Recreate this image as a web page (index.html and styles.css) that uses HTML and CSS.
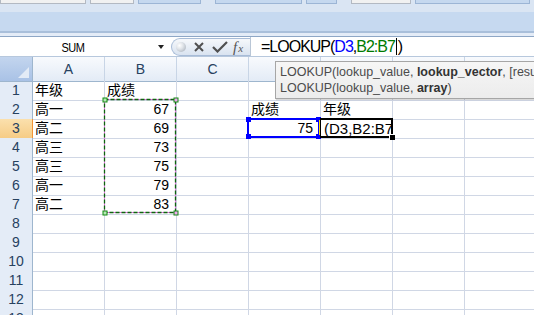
FILE: index.html
```html
<!DOCTYPE html>
<html lang="zh-CN">
<head>
  <meta charset="UTF-8" />
  <title>LOOKUP</title>
  <link rel="stylesheet" href="styles.css">
</head>
<body>
  <div class="ribbon">
    <div class="tabs">
      <span class="tab grey" style="width:90px"></span>
      <span class="tab grey" style="width:44px"></span>
      <span class="tab blue" style="width:65px"></span>
      <span class="tab blue gap" style="width:91px"></span>
      <span class="tab blue" style="width:31px"></span>
      <span class="tab grey gap" style="width:62px"></span>
      <span class="tab blue" style="width:120px"></span>
    </div>
  </div>

  <div class="fbar">
    <div class="namebox">
      <span class="name">SUM</span>
      <span class="drop"></span>
    </div>
    <div class="btns">
      <span class="knob"></span>
      <svg class="ico" width="12" height="12" viewBox="0 0 12 12">
        <path d="M2 2L10 10M10 2L2 10" stroke="#505050" stroke-width="2" fill="none"/>
      </svg>
      <svg class="ico" width="16" height="12" viewBox="0 0 16 12">
        <path d="M1 6L5.5 10.5L15 1" stroke="#505050" stroke-width="2.2" fill="none"/>
      </svg>
      <span class="fx"><i>f</i><i class="x">x</i></span>
    </div>
    <div class="formula">=LOOKUP(<span class="ref-d">D3</span>,<span class="ref-b">B2:B7</span><span class="caret"></span>)</div>
  </div>

  <div class="sheet">
    <!-- D..G headers sit under the tooltip -->
    <div class="row head">
      <div class="corner"></div>
      <div class="ch">A</div><div class="ch">B</div><div class="ch">C</div><div class="ch"></div>
      <div class="ch"></div><div class="ch"></div><div class="ch"></div>
    </div>
    <div class="row"><div class="rh">1</div><div class="c">年级</div><div class="c">成绩</div><div class="c"></div><div class="c"></div><div class="c"></div><div class="c"></div><div class="c"></div></div>
    <div class="row"><div class="rh">2</div><div class="c">高一</div><div class="c num">67</div><div class="c"></div><div class="c">成绩</div><div class="c">年级</div><div class="c"></div><div class="c"></div></div>
    <div class="row"><div class="rh sel">3</div><div class="c">高二</div><div class="c num">69</div><div class="c"></div><div class="c num">75</div><div class="c edit">(D3,B2:B7</div><div class="c"></div><div class="c"></div></div>
    <div class="row"><div class="rh">4</div><div class="c">高三</div><div class="c num">73</div><div class="c"></div><div class="c"></div><div class="c"></div><div class="c"></div><div class="c"></div></div>
    <div class="row"><div class="rh">5</div><div class="c">高三</div><div class="c num">75</div><div class="c"></div><div class="c"></div><div class="c"></div><div class="c"></div><div class="c"></div></div>
    <div class="row"><div class="rh">6</div><div class="c">高一</div><div class="c num">79</div><div class="c"></div><div class="c"></div><div class="c"></div><div class="c"></div><div class="c"></div></div>
    <div class="row"><div class="rh">7</div><div class="c">高二</div><div class="c num">83</div><div class="c"></div><div class="c"></div><div class="c"></div><div class="c"></div><div class="c"></div></div>
    <div class="row"><div class="rh">8</div><div class="c"></div><div class="c"></div><div class="c"></div><div class="c"></div><div class="c"></div><div class="c"></div><div class="c"></div></div>
    <div class="row"><div class="rh">9</div><div class="c"></div><div class="c"></div><div class="c"></div><div class="c"></div><div class="c"></div><div class="c"></div><div class="c"></div></div>
    <div class="row"><div class="rh">10</div><div class="c"></div><div class="c"></div><div class="c"></div><div class="c"></div><div class="c"></div><div class="c"></div><div class="c"></div></div>
    <div class="row"><div class="rh">11</div><div class="c"></div><div class="c"></div><div class="c"></div><div class="c"></div><div class="c"></div><div class="c"></div><div class="c"></div></div>
    <div class="row"><div class="rh">12</div><div class="c"></div><div class="c"></div><div class="c"></div><div class="c"></div><div class="c"></div><div class="c"></div><div class="c"></div></div>
    <div class="row"><div class="rh">13</div><div class="c"></div><div class="c"></div><div class="c"></div><div class="c"></div><div class="c"></div><div class="c"></div><div class="c"></div></div>

    <!-- copy range B2:B7 -->
    <svg class="ants" width="78" height="120" viewBox="0 0 78 120">
      <rect x="2.5" y="2.5" width="71" height="113" fill="none" stroke="#e76fe7" stroke-width="1"/>
      <rect x="2.5" y="2.5" width="71" height="113" fill="none" stroke="#0e650e" stroke-width="1.3" stroke-dasharray="4 2"/>
      <rect x="1" y="1" width="4" height="4" fill="#b6e8b6" stroke="#138a13"/>
      <rect x="72" y="1" width="4" height="4" fill="#f3a8f3" stroke="#138a13"/>
      <rect x="1" y="114" width="4" height="4" fill="#b6e8b6" stroke="#138a13"/>
      <rect x="72" y="114" width="4" height="4" fill="#f3a8f3" stroke="#138a13"/>
    </svg>

    <!-- reference D3 -->
    <div class="refbox">
      <span class="h tl"></span><span class="h tr"></span>
      <span class="h bl"></span><span class="h br"></span>
    </div>
    <span class="yel"></span>

    <!-- active cell E3 -->
    <div class="active"><span class="fill"></span></div>

    <div class="tip">
      <div>LOOKUP(lookup_value, <b>lookup_vector</b>, [result_vector])</div>
      <div>LOOKUP(lookup_value, <b>array</b>)</div>
    </div>
  </div>
</body>
</html>
```

FILE: styles.css
```css
body {
  margin: 0;
  width: 534px;
  height: 315px;
  overflow: hidden;
  background: #fff;
  font-family: "Liberation Sans", "Noto Sans CJK SC", sans-serif;
  color: #000;
}

/* ribbon strip */
.ribbon {
  height: 31px;
  background: linear-gradient(#dae5f3 0, #dae5f3 12px, #c6d9f0 12px);
  border-bottom: 2px solid #a9bfda;
}
.tabs {
  display: flex;
  height: 4px;
}
.tab {
  height: 3px;
  margin-right: 4px;
  border: 1px solid #b3b9c2;
  border-top: 0;
}
.tab.grey { background: #f1f1f1; }
.tab.blue { background: #c5d8ef; border-color: #9cb5d5; }
.tab.gap { margin-left: 10px; }

/* formula bar */
.fbar {
  display: flex;
  height: 19px;
  border-top: 3px solid #e4ecf7;
  box-shadow: inset 0 1px 0 #8ea7c6;
  padding-top: 1px;
  border-bottom: 1px solid #b7c8dd;
}
.namebox {
  width: 171px;
  display: flex;
  align-items: center;
  position: relative;
}
.name {
  width: 146px;
  text-align: center;
  font-size: 11px;
  letter-spacing: -0.5px;
  transform: scaleY(1.15);
}
.drop {
  position: absolute;
  left: 158px;
  top: 8px;
  border-left: 3px solid transparent;
  border-right: 3px solid transparent;
  border-top: 4px solid #222;
}
.btns {
  width: 74px;
  margin-top: 1px;
  display: flex;
  align-items: center;
  gap: 7px;
  padding-left: 4px;
  border: 1px solid #a8bcd7;
  border-right: 0;
  border-radius: 10px 0 0 10px;
  background: linear-gradient(#f6f8fb, #d9e3f0);
}
.knob {
  width: 10px;
  height: 10px;
  border-radius: 50%;
  background: radial-gradient(circle at 35% 35%, #ffffff 0, #dfe3e8 40%, #9ea7b2 100%);
}
.ico { display: block; }
.fx {
  font-family: "Liberation Serif", serif;
  font-size: 15px;
  color: #555;
  margin-left: -2px;
}
.fx .x { font-size: 11px; margin-left: 1px; }
.formula {
  flex: 1;
  border-left: 1px solid #b9c6d6;
  padding-left: 10px;
  font-size: 16px;
  letter-spacing: -1px;
  line-height: 19px;
  white-space: nowrap;
}
.ref-d { color: #0000ff; }
.ref-b { color: #007a00; }
.caret {
  display: inline-block;
  width: 1px;
  height: 17px;
  background: #000;
  vertical-align: -3px;
  margin: 0 1px 0 1px;
}

/* grid */
.sheet {
  position: relative;
  width: 537px;
}
.row {
  display: grid;
  grid-template-columns: 33px repeat(7, 72px);
  height: 19px;
}
.row.head { height: 24px; }
.corner {
  position: relative;
  background: linear-gradient(#c3d5ee, #a9c2e6);
  border-right: 1px solid #9eb6ce;
  border-bottom: 1px solid #9eb6ce;
}
.corner::after {
  content: "";
  position: absolute;
  right: 3px;
  bottom: 3px;
  border-left: 11px solid transparent;
  border-bottom: 11px solid #e3ebf6;
}
.ch {
  background: linear-gradient(#f8fafd, #e3ebf6);
  border-right: 1px solid #c8d5e6;
  border-bottom: 1px solid #9eb6ce;
  text-align: center;
  font-size: 14px;
  line-height: 24px;
  color: #27415f;
}
.rh {
  background: #e4ecf7;
  border-right: 1px solid #9eb6ce;
  border-bottom: 1px solid #c8d5e6;
  text-align: center;
  font-size: 14px;
  line-height: 19px;
  color: #27415f;
}
.rh.sel {
  background: linear-gradient(#fbe0ad, #f6cc86);
  border-right-color: #f29536;
  border-bottom-color: #f2b357;
}
.c {
  border-right: 1px solid #d0d7e5;
  border-bottom: 1px solid #d0d7e5;
  font-size: 14px;
  line-height: 19px;
  padding-left: 2px;
  white-space: nowrap;
}
.c.num {
  text-align: right;
  padding: 0 7px 0 0;
}
.c.edit {
  font-size: 15px;
  padding-left: 3px;
  overflow: hidden;
}

/* overlays */
.ants {
  position: absolute;
  left: 102px;
  top: 40px;
}
.refbox {
  position: absolute;
  left: 247px;
  top: 61px;
  width: 69px;
  height: 16px;
  border: 2px solid #0000ff;
}
.h {
  position: absolute;
  width: 5px;
  height: 5px;
  background: #0000ff;
}
.h.tl { left: -3px; top: -3px; }
.h.tr { right: -3px; top: -3px; }
.h.bl { left: -3px; bottom: -3px; }
.h.br { right: -3px; bottom: -3px; }
.yel {
  position: absolute;
  left: 319px;
  top: 63px;
  width: 2px;
  height: 15px;
  background: #ffe000;
}
.active {
  position: absolute;
  left: 320px;
  top: 61px;
  width: 70px;
  height: 16px;
  border: 2px solid #000;
  border-left-width: 1px;
}
.fill {
  position: absolute;
  right: -4px;
  bottom: -4px;
  width: 5px;
  height: 5px;
  background: #000;
  border: 1px solid #fff;
  border-width: 1px 0 0 1px;
}
.tip {
  position: absolute;
  left: 275px;
  top: 4px;
  width: 300px;
  height: 34px;
  padding: 2px 0 0 4px;
  background: linear-gradient(#f6f6f6, #ececec);
  border: 1px solid #a6a6a6;
  box-shadow: 1px 1px 1px rgba(0, 0, 0, 0.15);
  font-size: 12.5px;
  line-height: 16px;
  color: #4b4b4b;
  white-space: nowrap;
}
.tip b { color: #333; }
```
